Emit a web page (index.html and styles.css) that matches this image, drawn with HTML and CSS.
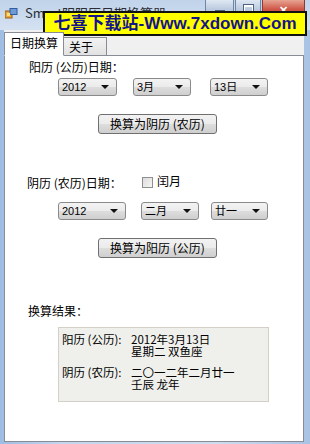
FILE: index.html
```html
<!DOCTYPE html>
<html lang="zh-CN">
<head>
    <meta charset="UTF-8">
    <meta name="viewport" content="width=device-width, initial-scale=1.0">
    <title>Smart阴阳历日期换算器</title>
    <link rel="stylesheet" href="styles.css">
</head>
<body>
    <div class="window">
        <div class="titlebar">
            <svg class="app-icon" width="13" height="11" viewBox="0 0 13 11">
                <rect x="0" y="3" width="7" height="7" fill="#e8a33c" stroke="#9a5a12" stroke-width="1"/>
                <rect x="5" y="0.5" width="7" height="6" fill="#6d9ad6" stroke="#2f5d9e" stroke-width="1"/>
                <rect x="2" y="5" width="3" height="3" fill="#fbe07a"/>
            </svg>
            <span class="title">Smart阴阳历日期换算器</span>
            <div class="controls">
                <div class="ctl ctl-min"><span class="glyph-min"></span></div>
                <div class="ctl ctl-max"><span class="glyph-max"></span></div>
                <div class="ctl ctl-close">✕</div>
            </div>
            <div class="banner">七喜下载站-Www.7xdown.Com</div>
        </div>

        <div class="client">
            <div class="tabs">
                <div class="tab active">日期换算</div>
                <div class="tab">关于</div>
            </div>
            <div class="panel">
                <div class="label label-solar">阳历 (公历)日期：</div>
                <div class="combo-row row-solar">
                    <div class="combo w59">2012<span class="arrow"></span></div>
                    <div class="combo w58 gap16">3月<span class="arrow"></span></div>
                    <div class="combo w58 gap19">13日<span class="arrow"></span></div>
                </div>
                <button class="btn btn-first">换算为阴历 (农历)</button>

                <div class="lunar-head">
                    <span class="label-lunar">阴历 (农历)日期：</span>
                    <span class="checkbox"></span>
                    <span class="check-text">闰月</span>
                </div>
                <div class="combo-row row-lunar">
                    <div class="combo w68">2012<span class="arrow"></span></div>
                    <div class="combo w58 gap15">二月<span class="arrow"></span></div>
                    <div class="combo w57 gap12">廿一<span class="arrow"></span></div>
                </div>
                <button class="btn btn-second">换算为阳历 (公历)</button>

                <div class="label label-result">换算结果：</div>
                <div class="result">
                    <div class="result-group">
                        <div class="result-key">阳历 (公历):</div>
                        <div class="result-val">2012年3月13日<br>星期二 双鱼座</div>
                    </div>
                    <div class="result-group">
                        <div class="result-key">阴历 (农历):</div>
                        <div class="result-val">二〇一二年二月廿一<br>壬辰 龙年</div>
                    </div>
                </div>
            </div>
        </div>
    </div>
</body>
</html>
```

FILE: styles.css
```css
body {
    margin: 0;
    padding: 0;
    font-family: "Noto Sans CJK SC", "Liberation Sans", sans-serif;
    font-size: 12px;
    color: #000;
    background-color: #fff;
}

.window {
    width: 310px;
    height: 444px;
    display: flex;
    flex-direction: column;
    background: linear-gradient(to right, #9fbde3, #c3d6ee 20%, #cddcef 70%, #a9c3e4);
    overflow: hidden;
}

/* title bar */
.titlebar {
    position: relative;
    height: 30px;
    flex: none;
    display: flex;
    align-items: flex-start;
    background: linear-gradient(to bottom, #c0d3ea, #d4e1f1);
}

.app-icon {
    margin: 8px 0 0 5px;
}

.title {
    margin: 3px 0 0 7px;
    font-size: 13px;
    color: #2a2f36;
    white-space: nowrap;
}

.controls {
    display: flex;
    margin-left: auto;
    margin-right: 5px;
}

.ctl {
    height: 19px;
    border: 1px solid #6f86a6;
    border-top: none;
    display: flex;
    align-items: center;
    justify-content: center;
    box-sizing: border-box;
}

.ctl-min {
    width: 29px;
    border-radius: 0 0 0 4px;
    background: linear-gradient(to bottom, #dfe8f3, #bccbdf 50%, #aebfd6);
}

.ctl-max {
    width: 26px;
    margin-left: 1px;
    background: linear-gradient(to bottom, #dfe8f3, #bccbdf 50%, #aebfd6);
}

.ctl-close {
    width: 43px;
    margin-left: 1px;
    border-color: #8d3a30;
    border-radius: 0 0 4px 0;
    background: linear-gradient(to bottom, #e7a593, #d0594a 50%, #c0392b);
    color: #fff;
    font-size: 11px;
    font-weight: bold;
}

.glyph-min {
    width: 8px;
    height: 2px;
    margin-top: 6px;
    background-color: #fff;
    border: 1px solid #4f637f;
}

.glyph-max {
    width: 7px;
    height: 5px;
    border: 1px solid #fff;
    border-top-width: 2px;
    outline: 1px solid #4f637f;
}

.banner {
    position: absolute;
    left: 43px;
    top: 11px;
    width: 264px;
    height: 25px;
    box-sizing: border-box;
    background-color: #ffff00;
    border: 2px solid #111;
    color: #14148a;
    font-family: "Liberation Sans", "Noto Sans CJK SC", sans-serif;
    font-size: 17px;
    font-weight: bold;
    line-height: 21px;
    text-align: center;
    white-space: nowrap;
}

/* client area */
.client {
    flex: 1;
    margin: 0 6px 2px 4px;
    display: flex;
    flex-direction: column;
    background-color: #f0f0f0;
}

.tabs {
    height: 25px;
    display: flex;
    align-items: flex-end;
    flex: none;
}

.tab {
    height: 17px;
    width: 32px;
    padding: 0 5px;
    margin-bottom: -1px;
    border: 1px solid #898c95;
    border-left: none;
    background: linear-gradient(to bottom, #f2f2f2, #e2e2e2);
    line-height: 17px;
    white-space: nowrap;
}

.tab.active {
    height: 22px;
    width: 48px;
    border-left: 1px solid #898c95;
    border-bottom-color: #fff;
    background: #fff;
    line-height: 20px;
    position: relative;
    z-index: 1;
}

.panel {
    flex: 1;
    border: 1px solid #898c95;
    background-color: #fff;
}

.label,
.lunar-head {
    height: 14px;
    line-height: 14px;
    white-space: nowrap;
}

.label-solar {
    margin: 4px 0 0 24px;
}

.combo-row {
    display: flex;
    margin-left: 53px;
    height: 18px;
}

.row-solar {
    margin-top: 4px;
}

.row-lunar {
    margin-top: 12px;
}

.combo {
    position: relative;
    height: 18px;
    box-sizing: border-box;
    border: 1px solid #8a8a8a;
    border-radius: 3px;
    background: linear-gradient(to bottom, #f3f3f3, #ebebeb 50%, #dddddd 51%, #cfcfcf);
    font-family: "Liberation Sans", "Noto Sans CJK SC", sans-serif;
    font-size: 11px;
    line-height: 16px;
    padding-left: 3px;
}

.arrow {
    position: absolute;
    right: 7px;
    top: 6px;
    width: 0;
    height: 0;
    border-left: 4px solid transparent;
    border-right: 4px solid transparent;
    border-top: 4px solid #111;
}

.w57 { width: 57px; }
.w58 { width: 58px; }
.w59 { width: 59px; }
.w68 { width: 68px; }
.gap12 { margin-left: 12px; }
.gap15 { margin-left: 15px; }
.gap16 { margin-left: 16px; }
.gap19 { margin-left: 19px; }

.btn {
    display: block;
    width: 119px;
    height: 20px;
    margin-left: 93px;
    padding: 0;
    border: 1px solid #707070;
    border-radius: 3px;
    background: linear-gradient(to bottom, #f2f2f2, #ebebeb 50%, #dddddd 51%, #cfcfcf);
    font-family: "Noto Sans CJK SC", "Liberation Sans", sans-serif;
    font-size: 12px;
    line-height: 18px;
    color: #000;
}

.btn-first {
    margin-top: 18px;
}

.btn-second {
    margin-top: 18px;
}

.lunar-head {
    display: flex;
    align-items: center;
    margin: 42px 0 0 22px;
}

.label-lunar {
    width: 115px;
}

.checkbox {
    width: 11px;
    height: 11px;
    border: 1px solid #8e8f8f;
    background: linear-gradient(to bottom right, #dcdcdc, #f6f6f6);
    box-sizing: border-box;
    margin-top: -2px;
}

.check-text {
    margin-left: 4px;
    margin-top: -4px;
}

.label-result {
    margin: 46px 0 0 23px;
}

.result {
    width: 211px;
    height: 75px;
    box-sizing: border-box;
    margin: 9px 0 0 53px;
    padding: 5px 0 0 3px;
    border: 1px solid #d4d0c8;
    background-color: #efefeb;
}

.result-group {
    display: flex;
    font-size: 11.5px;
    line-height: 12px;
}

.result-group + .result-group {
    margin-top: 9px;
}

.result-key {
    width: 69px;
    flex: none;
    white-space: nowrap;
}

.result-val {
    white-space: nowrap;
}
```
